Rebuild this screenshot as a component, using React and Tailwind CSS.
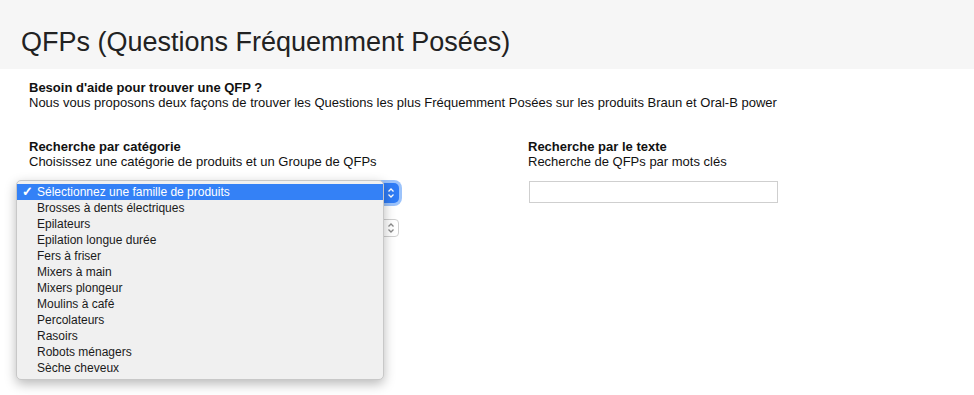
import React from 'react';

const families = [
  'Brosses à dents électriques',
  'Epilateurs',
  'Epilation longue durée',
  'Fers à friser',
  'Mixers à main',
  'Mixers plongeur',
  'Moulins à café',
  'Percolateurs',
  'Rasoirs',
  'Robots ménagers',
  'Sèche cheveux',
];

function Stepper({ light }) {
  return (
    <svg width="8" height="12" viewBox="0 0 8 12" className="block">
      <path d="M1.5 4.5 L4 2 L6.5 4.5" fill="none" stroke={light ? '#ffffff' : '#8a8a8a'} strokeWidth="1.3" />
      <path d="M1.5 7.5 L4 10 L6.5 7.5" fill="none" stroke={light ? '#ffffff' : '#8a8a8a'} strokeWidth="1.3" />
    </svg>
  );
}

export default function App() {
  return (
    <div className="w-[974px] h-[395px] bg-white overflow-hidden text-[#111] text-[13px] leading-[15px]" style={{ fontFamily: '"Liberation Sans", Arial, sans-serif' }}>
      {/* Header */}
      <div className="h-[69px] bg-[#f6f6f6] flex items-end pl-[21px] pb-[12px]">
        <h1 className="text-[27px] leading-[30px] text-[#222] font-normal">QFPs (Questions Fréquemment Posées)</h1>
      </div>

      <div className="px-[29px] pt-[11px]">
        <div className="font-bold">Besoin d'aide pour trouver une QFP ?</div>
        <div>Nous vous proposons deux façons de trouver les Questions les plus Fréquemment Posées sur les produits Braun et Oral-B power</div>

        <div className="grid grid-cols-[499px_1fr] mt-[29px]">
          {/* Category search */}
          <div>
            <div className="font-bold">Recherche par catégorie</div>
            <div>Choisissez une catégorie de produits et un Groupe de QFPs</div>

            <div className="relative mt-[14px] w-[370px]">
              <div className="flex flex-col gap-[16px] items-end">
                <div className="h-[20px] w-[120px] rounded-[5px] bg-[#2f7cf6] shadow-[0_0_0_3px_#9cc3fb] flex items-center justify-end pr-[4px]">
                  <Stepper light />
                </div>
                <div className="h-[18px] w-[120px] rounded-[4px] border border-[#d0d0d0] bg-white flex items-center justify-end pr-[3px]">
                  <Stepper />
                </div>
              </div>

              {/* Open menu */}
              <div className="absolute left-[-13px] top-[-3px] w-[368px] bg-[#f0f0f0] border border-[#c8c8c8] rounded-[5px] shadow-[0_4px_12px_rgba(0,0,0,0.28)] py-[3px] text-[12px] leading-[16px] text-[#1a1a1a]">
                <div className="flex items-center bg-[#3481f6] text-white h-[16px]">
                  <span className="w-[20px] pl-[5px] text-[13px] font-bold">✓</span>
                  <span>Sélectionnez une famille de produits</span>
                </div>
                {families.map(f => (
                  <div key={f} className="h-[16px] pl-[20px]">{f}</div>
                ))}
              </div>
            </div>
          </div>

          {/* Text search */}
          <div>
            <div className="font-bold">Recherche par le texte</div>
            <div>Recherche de QFPs par mots clés</div>
            <input type="text" className="mt-[12px] ml-px w-[249px] h-[22px] border border-[#cfcfcf] bg-white outline-none" />
          </div>
        </div>
      </div>
    </div>
  );
}
